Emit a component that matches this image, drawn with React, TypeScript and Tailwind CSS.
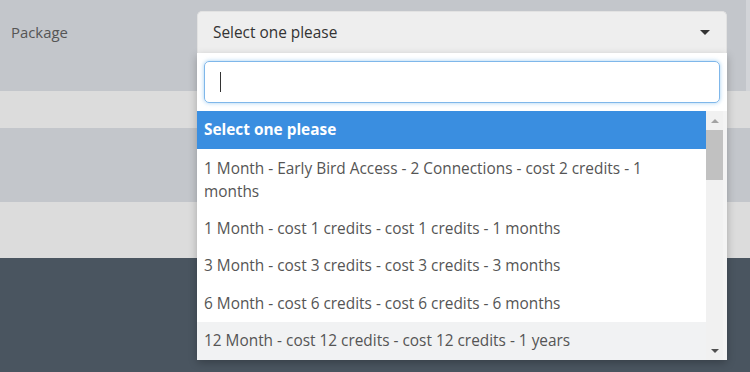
const OPTIONS = [
  "1 Month - Early Bird Access - 2 Connections - cost 2 credits - 1 months",
  "1 Month - cost 1 credits - cost 1 credits - 1 months",
  "3 Month - cost 3 credits - cost 3 credits - 3 months",
  "6 Month - cost 6 credits - cost 6 credits - 6 months",
  "12 Month - cost 12 credits - cost 12 credits - 1 years",
];

export default function App() {
  return (
    <div
      className="relative w-[750px] h-[372px] overflow-hidden"
      style={{ fontFamily: '"Open Sans", "Noto Sans", sans-serif' }}
    >
      {/* page rows behind the dropdown */}
      <div className="flex flex-col h-full">
        <div className="h-[91px] bg-[#c3c6cb] flex">
          <div className="flex-1 pl-[11px] pt-[21px] text-[14.9px] text-[#555]">
            Package
          </div>
          <div className="w-[4px] bg-[#d2d4d8]" />
        </div>
        <div className="h-[37px] bg-[#dcdcdc]" />
        <div className="h-[74px] bg-[#c3c6cb]" />
        <div className="h-[56px] bg-[#dcdcdc]" />
        <div className="flex-1 bg-[#4a5560]" />
      </div>

      {/* select + open dropdown */}
      <div className="absolute left-[197px] top-[11px] w-[530px]">
        <div className="h-[42px] bg-[#eeeeee] rounded-t-[5px] border border-b-0 border-[#e2e2e2] flex items-center pl-[15px] pr-[16px]">
          <span className="flex-1 text-[15.4px] text-[#333]">Select one please</span>
          <span className="w-0 h-0 border-l-[5px] border-r-[5px] border-t-[5px] border-l-transparent border-r-transparent border-t-[#333]" />
        </div>
        <div className="bg-white rounded-b-[4px] shadow-[0_3px_8px_rgba(0,0,0,0.25)]">
          <div className="px-[7px] pt-[8px] pb-[8px]">
            <div className="h-[42px] rounded-[5px] border border-[#7fb7ea] shadow-[0_0_4px_rgba(102,175,233,0.6)] flex items-center pl-[15px]">
              <span className="w-px h-[20px] bg-[#333]" />
            </div>
          </div>
          <div className="flex h-[249px] overflow-hidden">
            <div className="w-[509px] text-[15.4px] leading-[22.5px] text-[#555]">
              <div className="bg-[#3a8ee0] text-white font-bold px-[7px] pt-[8px] pb-[7px]">
                Select one please
              </div>
              {OPTIONS.map((o, i) => (
                <div
                  key={o}
                  className={`px-[7px] pt-[8px] pb-[7px] pr-[40px] ${i === 0 ? "leading-[23px]" : ""} ${i === OPTIONS.length - 1 ? "bg-[#f1f2f3]" : ""}`}
                >
                  {o}
                </div>
              ))}
            </div>
            <div className="w-[17px] bg-[#f1f1f1] flex flex-col items-center">
              <div className="h-[19px] flex items-center justify-center">
                <span className="w-0 h-0 border-l-[4px] border-r-[4px] border-b-[4px] border-l-transparent border-r-transparent border-b-[#a3a3a3]" />
              </div>
              <div className="w-[17px] h-[50px] bg-[#c1c1c1]" />
              <div className="flex-1" />
              <div className="h-[19px] flex items-center justify-center">
                <span className="w-0 h-0 border-l-[4px] border-r-[4px] border-t-[4px] border-l-transparent border-r-transparent border-t-[#505050]" />
              </div>
            </div>
            <div className="w-[4px] bg-[#f4f4f4]" />
          </div>
        </div>
      </div>
    </div>
  );
}
